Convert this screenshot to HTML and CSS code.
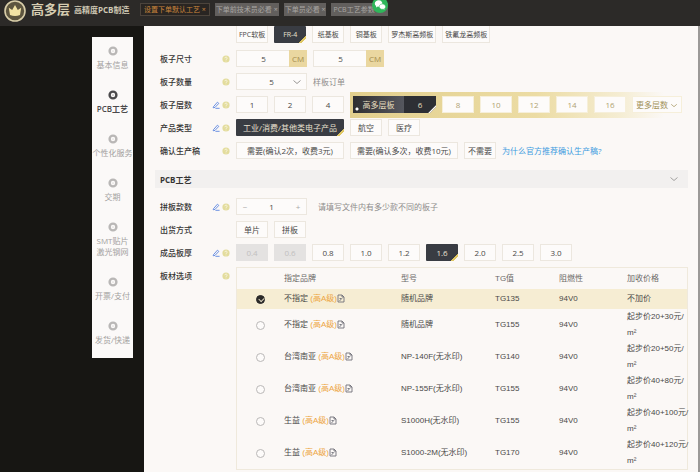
FILE: index.html
```html
<!DOCTYPE html>
<html lang="zh-CN">
<head>
  <meta charset="UTF-8">
  <meta name="viewport" content="width=device-width, initial-scale=1.0">
  <title>高多层 高精度PCB制造</title>
  <link rel="stylesheet" href="styles.css">
</head>
<body>
  <svg class="sprite" aria-hidden="true">
    <symbol id="ring" viewBox="0 0 10 10"><circle cx="5" cy="5" r="3.4" fill="none" stroke="currentColor" stroke-width="2.4"/><circle cx="5" cy="5" r="0.5" fill="currentColor"/></symbol>
    <symbol id="pencil" viewBox="0 0 8 8"><path d="M1.4 5.8 5.4 1.2 6.8 2.4 3 6.4 1.2 6.8ZM3.4 7.3H7.6" fill="none" stroke="#5b86e0" stroke-width="0.9"/></symbol>
    <symbol id="help" viewBox="0 0 8 8"><circle cx="4" cy="4" r="3.6" fill="#e3dc9c"/><path d="M2.8 3.2C2.8 1.7 5.3 1.8 5.2 3.2 5.1 4 4 4 4 4.9M4 5.6V6.4" fill="none" stroke="#fbf8e8" stroke-width="0.8"/></symbol>
    <symbol id="doc" viewBox="0 0 8 9"><path d="M1 1H5L7 3V8H1ZM5 1V3H7M2.5 7 5.2 4M2.5 4.5H4" fill="none" stroke="#6f7079" stroke-width="0.9"/></symbol>
    <symbol id="down" viewBox="0 0 10 6"><path d="M1.5 1.5 5 4.5 8.5 1.5" fill="none" stroke="currentColor" stroke-width="0.9"/></symbol>
  </svg>

  <header class="topbar">
    <svg class="logo" viewBox="0 0 22 22" aria-hidden="true">
      <circle cx="11" cy="11" r="10" fill="#5d553f" stroke="#d8cda8" stroke-width="1.6"/>
      <path d="M6 15 4.8 7.8 8.2 10 11 5 13.8 10 17.2 7.8 16 15Q11 17 6 15Z" fill="#f2e3a4"/>
    </svg>
    <span class="brand">高多层</span>
    <span class="slogan">高精度PCB制造</span>
    <nav class="tabs">
      <button class="tab tab-active">设置下单默认工艺 ×</button>
      <button class="tab">下单前技术员必看 ×</button>
      <button class="tab">下单员必看 ×</button>
      <button class="tab tab-chat">PCB工艺参数
        <svg class="wechat" viewBox="0 0 16 16" aria-hidden="true">
          <circle cx="8" cy="8" r="8" fill="#2fb65a"/>
          <path d="M2.8 6.5a3.8 3.2 0 1 1 3 3.1L4 10.6 4.2 9A3.6 3 0 0 1 2.8 6.5Z" fill="#fff"/>
          <path d="M7.2 9.6a3.2 2.7 0 1 1 5.4 2l.2 1.3-1.5-.7a3.2 2.7 0 0 1-4.1-2.6Z" fill="#fff" stroke="#2fb65a" stroke-width="0.5"/>
        </svg>
      </button>
    </nav>
  </header>

  <div class="layout">
    <aside class="steps">
      <a class="step"><svg><use href="#ring"/></svg>基本信息</a>
      <a class="step step-active"><svg><use href="#ring"/></svg>PCB工艺</a>
      <a class="step"><svg><use href="#ring"/></svg>个性化服务</a>
      <a class="step"><svg><use href="#ring"/></svg>交期</a>
      <a class="step"><svg><use href="#ring"/></svg>SMT贴片<br>激光钢网</a>
      <a class="step"><svg><use href="#ring"/></svg>开票/支付</a>
      <a class="step"><svg><use href="#ring"/></svg>发货/快递</a>
    </aside>

    <main class="panel">
      <section class="rows">
        <div class="row row-top">
          <div class="caption"></div>
          <div class="options">
            <button class="opt">FPC软板</button>
            <button class="opt selected">FR-4</button>
            <button class="opt">纸基板</button>
            <button class="opt">铜基板</button>
            <button class="opt">罗杰斯高频板</button>
            <button class="opt">铁氟龙高频板</button>
          </div>
        </div>
        <div class="row">
          <div class="caption"><label for="sizeX">板子尺寸</label><svg><use href="#help"/></svg></div>
          <div class="options">
            <div class="unit-box"><input id="sizeX" type="text" value="5"><span class="unit">CM</span></div>
            <div class="unit-box"><input type="text" value="5" aria-label="板子尺寸"><span class="unit">CM</span></div>
          </div>
        </div>
        <div class="row">
          <div class="caption"><label for="qty">板子数量</label><svg><use href="#help"/></svg></div>
          <div class="options">
            <div class="select-box">
              <select id="qty"><option>5</option></select>
              <svg class="arrow"><use href="#down"/></svg>
            </div>
            <span class="note">样板订单</span>
          </div>
        </div>
        <div class="row">
          <div class="caption"><span>板子层数</span><svg><use href="#pencil"/></svg><svg><use href="#help"/></svg></div>
          <div class="options">
            <button class="opt">1</button>
            <button class="opt">2</button>
            <button class="opt">4</button>
            <div class="gold">
              <button class="multi"><span class="multi-name">高多层板</span><span class="multi-num">6</span></button>
              <button class="opt">8</button>
              <button class="opt">10</button>
              <button class="opt">12</button>
              <button class="opt">14</button>
              <button class="opt">16</button>
              <button class="opt more">更多层数<svg><use href="#down"/></svg></button>
            </div>
          </div>
        </div>
        <div class="row">
          <div class="caption"><span>产品类型</span><svg><use href="#pencil"/></svg><svg><use href="#help"/></svg></div>
          <div class="options">
            <button class="opt wide selected">工业/消费/其他类电子产品</button>
            <button class="opt">航空</button>
            <button class="opt">医疗</button>
          </div>
        </div>
        <div class="row">
          <div class="caption"><span>确认生产稿</span><svg><use href="#help"/></svg></div>
          <div class="options">
            <button class="opt wide">需要(确认2次，收费3元)</button>
            <button class="opt wide">需要(确认多次，收费10元)</button>
            <button class="opt">不需要</button>
            <a class="why" href="#">为什么官方推荐确认生产稿?</a>
          </div>
        </div>
      </section>

      <h2 class="section-title">PCB工艺<svg><use href="#down"/></svg></h2>

      <section class="rows">
        <div class="row">
          <div class="caption"><label for="styles">拼板款数</label><svg><use href="#pencil"/></svg><svg><use href="#help"/></svg></div>
          <div class="options">
            <div class="stepper">
              <button>−</button>
              <input id="styles" type="text" value="1">
              <button>+</button>
            </div>
            <span class="note note-far">请填写文件内有多少款不同的板子</span>
          </div>
        </div>
        <div class="row">
          <div class="caption"><span>出货方式</span></div>
          <div class="options">
            <button class="opt">单片</button>
            <button class="opt">拼板</button>
          </div>
        </div>
        <div class="row">
          <div class="caption"><span>成品板厚</span><svg><use href="#pencil"/></svg><svg><use href="#help"/></svg></div>
          <div class="options">
            <button class="opt" disabled>0.4</button>
            <button class="opt" disabled>0.6</button>
            <button class="opt">0.8</button>
            <button class="opt">1.0</button>
            <button class="opt">1.2</button>
            <button class="opt selected">1.6</button>
            <button class="opt">2.0</button>
            <button class="opt">2.5</button>
            <button class="opt">3.0</button>
          </div>
        </div>
        <div class="row">
          <div class="caption"><span>板材选项</span><svg><use href="#help"/></svg></div>
          <table class="materials">
            <colgroup>
              <col class="col-pick"><col class="col-brand"><col class="col-model"><col class="col-tg"><col class="col-fire"><col>
            </colgroup>
            <thead>
              <tr><th></th><th>指定品牌</th><th>型号</th><th>TG值</th><th>阻燃性</th><th>加收价格</th></tr>
            </thead>
            <tbody>
              <tr class="picked">
                <td><input type="radio" name="material" id="m1" checked></td>
                <td><label for="m1">不指定 <em>(高A级)</em><svg><use href="#doc"/></svg></label></td>
                <td>随机品牌</td><td>TG135</td><td>94V0</td><td>不加价</td>
              </tr>
              <tr>
                <td><input type="radio" name="material" id="m2"></td>
                <td><label for="m2">不指定 <em>(高A级)</em><svg><use href="#doc"/></svg></label></td>
                <td>随机品牌</td><td>TG155</td><td>94V0</td><td>起步价20+30元/<br>m²</td>
              </tr>
              <tr>
                <td><input type="radio" name="material" id="m3"></td>
                <td><label for="m3">台湾南亚 <em>(高A级)</em><svg><use href="#doc"/></svg></label></td>
                <td>NP-140F(无水印)</td><td>TG140</td><td>94V0</td><td>起步价20+50元/<br>m²</td>
              </tr>
              <tr>
                <td><input type="radio" name="material" id="m4"></td>
                <td><label for="m4">台湾南亚 <em>(高A级)</em><svg><use href="#doc"/></svg></label></td>
                <td>NP-155F(无水印)</td><td>TG155</td><td>94V0</td><td>起步价40+80元/<br>m²</td>
              </tr>
              <tr>
                <td><input type="radio" name="material" id="m5"></td>
                <td><label for="m5">生益 <em>(高A级)</em><svg><use href="#doc"/></svg></label></td>
                <td>S1000H(无水印)</td><td>TG155</td><td>94V0</td><td>起步价40+100元/<br>m²</td>
              </tr>
              <tr>
                <td><input type="radio" name="material" id="m6"></td>
                <td><label for="m6">生益 <em>(高A级)</em><svg><use href="#doc"/></svg></label></td>
                <td>S1000-2M(无水印)</td><td>TG170</td><td>94V0</td><td>起步价40+120元/<br>m²</td>
              </tr>
            </tbody>
          </table>
        </div>
      </section>
    </main>
  </div>
</body>
</html>
```
FILE: styles.css
```css
* {
    box-sizing: border-box;
}

body {
    margin: 0;
    min-height: 100vh;
    display: flex;
    flex-direction: column;
    background: #171613;
    color: #4a4948;
    font-family: "Open Sans", "Noto Sans CJK SC", sans-serif;
    font-size: 8px;
    line-height: 11px;
}

button, input, select {
    font: inherit;
    color: inherit;
    margin: 0;
    padding: 0;
    border: none;
    background: none;
}

.sprite {
    display: none;
}

/* top bar */
.topbar {
    display: flex;
    align-items: flex-start;
    height: 26px;
    padding-left: 4px;
    background: #2c2a28;
    white-space: nowrap;
}

.logo {
    width: 22px;
    height: 22px;
    margin-right: 5px;
}

.brand {
    width: 43px;
    color: #d6cdb2;
    font-size: 13px;
    font-weight: bold;
    line-height: 18px;
}

.slogan {
    width: 66px;
    color: #cfc8b4;
    font-weight: bold;
    line-height: 20px;
}

.tabs {
    display: flex;
    gap: 5px;
    padding-top: 3px;
}

.tab {
    height: 13px;
    padding: 0 1px;
    background: #625f5d;
    color: #a9a6a3;
    font-size: 7px;
}

.tab-active {
    padding: 0 3px;
    border: 1px solid #4c443c;
    background: #292522;
    color: #c9853c;
}

.tab-chat {
    position: relative;
    padding: 0 13px 0 2px;
}

.wechat {
    position: absolute;
    top: -6px;
    right: 0;
    width: 16px;
    height: 16px;
}

/* page body */
.layout {
    flex: 1;
    display: flex;
    align-items: flex-start;
    padding-left: 92px;
}

.steps {
    flex: none;
    display: flex;
    flex-direction: column;
    gap: 20px;
    width: 41px;
    margin: 11px 11px 0 0;
    padding: 9px 0 13px;
    background: #fbf9f8;
}

.step {
    display: flex;
    flex-direction: column;
    align-items: center;
    color: #a3a1a0;
    text-align: center;
    white-space: nowrap;
}

.step svg {
    width: 10px;
    height: 10px;
    margin-bottom: 3px;
    color: #b9b7b6;
}

.step-active, .step-active svg {
    color: #4b4a4c;
}

.step-active {
    font-weight: 600;
}

.panel {
    flex: 1;
    align-self: stretch;
    min-width: 0;
    padding: 0 10px 0 11px;
    border-right: 2px solid #9b9997;
    background: #fbf8f6;
}

.rows {
    display: flex;
    flex-direction: column;
    gap: 6px;
}

.row {
    display: flex;
    align-items: flex-start;
    padding-left: 5px;
}

.caption {
    flex: none;
    display: flex;
    align-items: center;
    gap: 2px;
    width: 76px;
    height: 17px;
    padding-right: 6px;
    color: #353433;
    font-weight: 500;
}

.caption > :first-child {
    margin-right: auto;
}

.caption svg {
    width: 8px;
    height: 8px;
}

.options {
    flex: 1;
    display: flex;
    align-items: center;
    gap: 6px;
    height: 17px;
    white-space: nowrap;
}

.opt {
    min-width: 32px;
    height: 17px;
    padding: 0 3px;
    border: 1px solid #ece7df;
    background: #fdfbfa;
}

.opt.wide {
    min-width: 108px;
    padding: 0 6px;
}

.opt:disabled {
    border-color: #e4e2e1;
    background: #e4e2e1;
    color: #c2c0bf;
}

.opt.selected {
    border: none;
    border-radius: 1px;
    background: linear-gradient(315deg, #fbf8f6 3px, #dfc765 3px, #dfc765 5px, #393c43 5px);
    color: #e8e1cf;
}

/* first row is cut by the top bar */
.row-top .options {
    height: 18px;
    align-items: flex-start;
    font-size: 7px;
}

.row-top .opt {
    padding: 0 2px;
    border-top: none;
}

.unit-box {
    display: flex;
    width: 71px;
    height: 17px;
    border: 1px solid #ece7df;
    background: #fdfbfa;
}

.unit-box input {
    flex: 1;
    min-width: 0;
    text-align: center;
}

.unit {
    width: 18px;
    margin: -1px;
    background: #ead7a0;
    color: #a58c4c;
    line-height: 17px;
    text-align: center;
}

.select-box {
    position: relative;
    width: 71px;
}

.select-box select {
    display: block;
    width: 100%;
    height: 17px;
    border: 1px solid #ece7df;
    background: #fdfbfa;
    appearance: none;
    text-align-last: center;
}

.arrow {
    position: absolute;
    top: 6px;
    right: 5px;
    width: 10px;
    height: 6px;
    color: #8d8b89;
}

.note {
    color: #8e8c8b;
}

.note-far {
    margin-left: 5px;
}

/* gold strip for the high layer counts */
.gold {
    flex: 1;
    display: flex;
    align-items: center;
    gap: 6px;
    height: 26px;
    padding-left: 3px;
    background: linear-gradient(90deg, #e2cf8d, #ecdca4 55%, #f5edd3 80%, #fbf8f6 93%);
}

.gold .opt {
    border-color: #f6efda;
    color: #b0a273;
}

.gold .more {
    color: #a3935b;
}

.more svg {
    width: 8px;
    height: 5px;
    margin-left: 2px;
}

.multi {
    display: flex;
    width: 83px;
    height: 17px;
    background: #35373d;
    color: #e6dcbf;
    line-height: 17px;
    clip-path: polygon(0 0, 100% 0, 100% 11px, 77px 100%, 0 100%);
}

.multi-name {
    flex: 1;
    background: radial-gradient(circle at 4px 13px, #fff 1px, transparent 2px), linear-gradient(90deg, #2f2f31, #55575e);
}

.multi-num {
    width: 32px;
    background: linear-gradient(315deg, #fbf8f6 5px, #2d2f34 6px);
}

.why {
    color: #3b9be0;
    text-decoration: none;
}

.section-title {
    display: flex;
    align-items: center;
    justify-content: space-between;
    height: 18px;
    margin: 11px 0 10px;
    padding: 0 9px 0 5px;
    background: #f2f0ef;
    color: #353433;
    font-size: 8px;
}

.section-title svg {
    width: 10px;
    height: 6px;
    color: #9a9897;
}

.stepper {
    display: flex;
    width: 71px;
    height: 17px;
    border: 1px solid #ece7df;
    background: #fdfbfa;
}

.stepper button {
    width: 16px;
    color: #a9a7a6;
}

.stepper input {
    flex: 1;
    min-width: 0;
    text-align: center;
}

/* material table */
.materials {
    flex: 1;
    width: 100%;
    table-layout: fixed;
    border-collapse: separate;
    border-spacing: 0;
    border: 1px solid #efe9dc;
    font-family: "Liberation Sans", "Noto Sans CJK SC", sans-serif;
    line-height: 16px;
    white-space: nowrap;
}

.col-pick {
    width: 47px;
}

.col-brand {
    width: 117px;
}

.col-model {
    width: 94px;
}

.col-tg {
    width: 64px;
}

.col-fire {
    width: 68px;
}

.materials th, .materials td {
    height: 32px;
    padding: 0;
    text-align: left;
    vertical-align: middle;
}

.materials th {
    height: 21px;
    color: #6b6968;
    font-weight: normal;
}

.materials .picked td {
    height: 20px;
    background: #f6edd3;
}

.materials td:first-child {
    text-align: center;
}

.materials em {
    color: #eda53f;
    font-style: normal;
}

.materials label svg {
    width: 8px;
    height: 9px;
    vertical-align: -2px;
}

.materials input {
    position: relative;
    display: block;
    width: 9px;
    height: 9px;
    margin: 0 auto;
    border: 1px solid #bab8b7;
    border-radius: 50%;
    background: #fdfbfa;
    appearance: none;
}

.materials input:checked {
    border-color: #2a2928;
    background: #2a2928;
}

.materials input:checked::after {
    content: "";
    position: absolute;
    top: 1px;
    left: 2px;
    width: 4px;
    height: 3px;
    border: solid #d9d2bd;
    border-width: 0 0 1px 1px;
    transform: rotate(-45deg);
}
```
